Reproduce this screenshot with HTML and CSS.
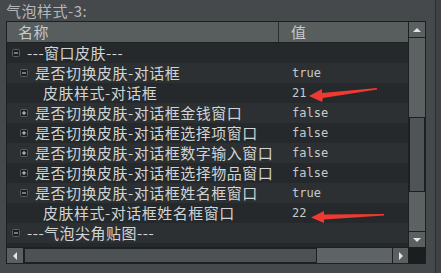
FILE: index.html
```html
<!DOCTYPE html>
<html lang="zh">
<head>
    <meta charset="UTF-8">
    <title>气泡样式</title>
    <link rel="stylesheet" href="styles.css">
</head>
<body>
    <div class="window">
        <div class="title">气泡样式-3:</div>
        <div class="frame">
            <div class="view">
                <div class="head">
                    <div class="c-name">名称</div>
                    <div class="c-val">值</div>
                </div>
                <div class="rows">
                    <div class="row">
                        <div class="name lv0"><svg class="tog" width="8" height="8"><rect x="0.5" y="0.5" width="7" height="7" rx="1" fill="#1b1d1f" stroke="#5b5f61"/><line x1="2" y1="4" x2="6" y2="4" stroke="#d4d6d6"/></svg>---窗口皮肤---</div>
                        <div class="val"></div>
                    </div>
                    <div class="row">
                        <div class="name lv1"><svg class="tog" width="8" height="8"><rect x="0.5" y="0.5" width="7" height="7" rx="1" fill="#1b1d1f" stroke="#5b5f61"/><line x1="2" y1="4" x2="6" y2="4" stroke="#d4d6d6"/></svg>是否切换皮肤-对话框</div>
                        <div class="val">true</div>
                    </div>
                    <div class="row">
                        <div class="name lv2">皮肤样式-对话框</div>
                        <div class="val">21</div>
                    </div>
                    <div class="row">
                        <div class="name lv1"><svg class="tog" width="8" height="8"><rect x="0.5" y="0.5" width="7" height="7" rx="1" fill="#1b1d1f" stroke="#5b5f61"/><line x1="2" y1="4" x2="6" y2="4" stroke="#d4d6d6"/><line x1="4" y1="2" x2="4" y2="6" stroke="#d4d6d6"/></svg>是否切换皮肤-对话框金钱窗口</div>
                        <div class="val">false</div>
                    </div>
                    <div class="row">
                        <div class="name lv1"><svg class="tog" width="8" height="8"><rect x="0.5" y="0.5" width="7" height="7" rx="1" fill="#1b1d1f" stroke="#5b5f61"/><line x1="2" y1="4" x2="6" y2="4" stroke="#d4d6d6"/><line x1="4" y1="2" x2="4" y2="6" stroke="#d4d6d6"/></svg>是否切换皮肤-对话框选择项窗口</div>
                        <div class="val">false</div>
                    </div>
                    <div class="row">
                        <div class="name lv1"><svg class="tog" width="8" height="8"><rect x="0.5" y="0.5" width="7" height="7" rx="1" fill="#1b1d1f" stroke="#5b5f61"/><line x1="2" y1="4" x2="6" y2="4" stroke="#d4d6d6"/><line x1="4" y1="2" x2="4" y2="6" stroke="#d4d6d6"/></svg>是否切换皮肤-对话框数字输入窗口</div>
                        <div class="val">false</div>
                    </div>
                    <div class="row">
                        <div class="name lv1"><svg class="tog" width="8" height="8"><rect x="0.5" y="0.5" width="7" height="7" rx="1" fill="#1b1d1f" stroke="#5b5f61"/><line x1="2" y1="4" x2="6" y2="4" stroke="#d4d6d6"/><line x1="4" y1="2" x2="4" y2="6" stroke="#d4d6d6"/></svg>是否切换皮肤-对话框选择物品窗口</div>
                        <div class="val">false</div>
                    </div>
                    <div class="row">
                        <div class="name lv1"><svg class="tog" width="8" height="8"><rect x="0.5" y="0.5" width="7" height="7" rx="1" fill="#1b1d1f" stroke="#5b5f61"/><line x1="2" y1="4" x2="6" y2="4" stroke="#d4d6d6"/></svg>是否切换皮肤-对话框姓名框窗口</div>
                        <div class="val">true</div>
                    </div>
                    <div class="row">
                        <div class="name lv2">皮肤样式-对话框姓名框窗口</div>
                        <div class="val">22</div>
                    </div>
                    <div class="row">
                        <div class="name lv0"><svg class="tog" width="8" height="8"><rect x="0.5" y="0.5" width="7" height="7" rx="1" fill="#1b1d1f" stroke="#5b5f61"/><line x1="2" y1="4" x2="6" y2="4" stroke="#d4d6d6"/></svg>---气泡尖角贴图---</div>
                        <div class="val"></div>
                    </div>
                    <div class="row">
                        <div class="name lv1"></div>
                        <div class="val"></div>
                    </div>
                </div>
            </div>
            <div class="vbar">
                <div class="btn up"><span class="tri-up"></span></div>
                <div class="vtrack"><div class="vthumb"></div></div>
                <div class="btn down"><span class="tri-down"></span></div>
            </div>
            <div class="hbar">
                <div class="hbtn left"><span class="tri-left"></span></div>
                <div class="hthumb"></div>
                <div class="htrack"></div>
                <div class="hbtn right"><span class="tri-right"></span></div>
            </div>
            <div class="corner"></div>
        </div>
    </div>

    <svg class="annot" width="441" height="273">
        <polygon points="309,96 322,89 322,93 377,88 377,89.5 323,98 322,102" fill="#ee3a30"/>
        <polygon points="311,217.5 324,211 324,214.5 384,214 384,215.5 324,219.5 324,223" fill="#ee3a30"/>
    </svg>
</body>
</html>
```

FILE: styles.css
```css
body {
    margin: 0;
    width: 441px;
    height: 273px;
    overflow: hidden;
    position: relative;
    background-color: #3f4346;
    font-family: "Noto Sans CJK SC", sans-serif;
}

.window {
    width: 436px;
    height: 273px;
    box-sizing: border-box;
    padding: 1px 0 0 6px;
    background-color: #45494c;
    border-right: 1px solid #2a2d2f;
}

.title {
    height: 20px;
    line-height: 20px;
    font-size: 15px;
    letter-spacing: 0.5px;
    color: #b3b7b9;
}

.frame {
    width: 420px;
    height: 243px;
    box-sizing: border-box;
    border: 1px solid #1d2022;
    display: grid;
    grid-template-columns: 1fr 17px;
    grid-template-rows: 1fr 16px;
}

.view {
    overflow: hidden;
    background-color: #25292b;
}

.head {
    display: flex;
    height: 20px;
    line-height: 20px;
    background-color: #585d5e;
    border-bottom: 1px solid #1d2022;
    font-size: 15px;
    letter-spacing: 0.5px;
    color: #c6caca;
}

.head .c-name {
    width: 260px;
    padding-left: 11px;
    border-right: 1px solid #2b2e30;
}

.head .c-val {
    padding-left: 12px;
}

.row {
    display: flex;
    height: 20px;
    line-height: 20px;
}

.row:nth-child(even) {
    background-color: #2c3032;
}

.name {
    width: 272px;
    flex-shrink: 0;
    display: flex;
    align-items: center;
    white-space: nowrap;
    font-size: 15px;
    letter-spacing: 0.5px;
    color: #d2d5d6;
}

.lv0 {
    padding-left: 5px;
    width: 267px;
}

.lv1 {
    padding-left: 13px;
    width: 259px;
}

.lv2 {
    padding-left: 36px;
    width: 236px;
}

.tog {
    flex-shrink: 0;
    margin-right: 7px;
}

.val {
    padding-left: 13px;
    font-family: "DejaVu Sans Mono", monospace;
    font-size: 12px;
    color: #c6cacd;
}

.vbar {
    display: flex;
    flex-direction: column;
    border-left: 1px solid #1d2022;
    background-color: #5c6162;
}

.btn {
    height: 15px;
    display: flex;
    align-items: center;
    justify-content: center;
    background-color: #5a5f60;
}

.btn.up {
    border-bottom: 1px solid #1d2022;
}

.btn.down {
    border-top: 1px solid #1d2022;
}

.vtrack {
    flex: 1;
    display: flex;
    flex-direction: column;
}

.vthumb {
    margin-top: 79px;
    height: 75px;
    box-sizing: border-box;
    border: 1px solid #1d2022;
    background-color: #4f5456;
}

.hbar {
    display: flex;
    border-top: 1px solid #1d2022;
    background-color: #5e6364;
}

.hbtn {
    width: 16px;
    display: flex;
    align-items: center;
    justify-content: center;
    background-color: #5a5f60;
}

.hbtn.left {
    border-right: 1px solid #1d2022;
}

.hbtn.right {
    width: 15px;
    border-left: 1px solid #1d2022;
}

.hthumb {
    width: 293px;
    box-sizing: border-box;
    border: 1px solid #1d2022;
    background-color: #4c5153;
}

.htrack {
    flex: 1;
}

.corner {
    background-color: #1b1d1e;
}

.tri-up {
    border-left: 4px solid transparent;
    border-right: 4px solid transparent;
    border-bottom: 4px solid #e4e6e6;
}

.tri-down {
    border-left: 4px solid transparent;
    border-right: 4px solid transparent;
    border-top: 4px solid #e4e6e6;
}

.tri-left {
    border-top: 4px solid transparent;
    border-bottom: 4px solid transparent;
    border-right: 4px solid #e4e6e6;
}

.tri-right {
    border-top: 4px solid transparent;
    border-bottom: 4px solid transparent;
    border-left: 4px solid #e4e6e6;
}

.annot {
    position: absolute;
    top: 0;
    left: 0;
    pointer-events: none;
}
```
